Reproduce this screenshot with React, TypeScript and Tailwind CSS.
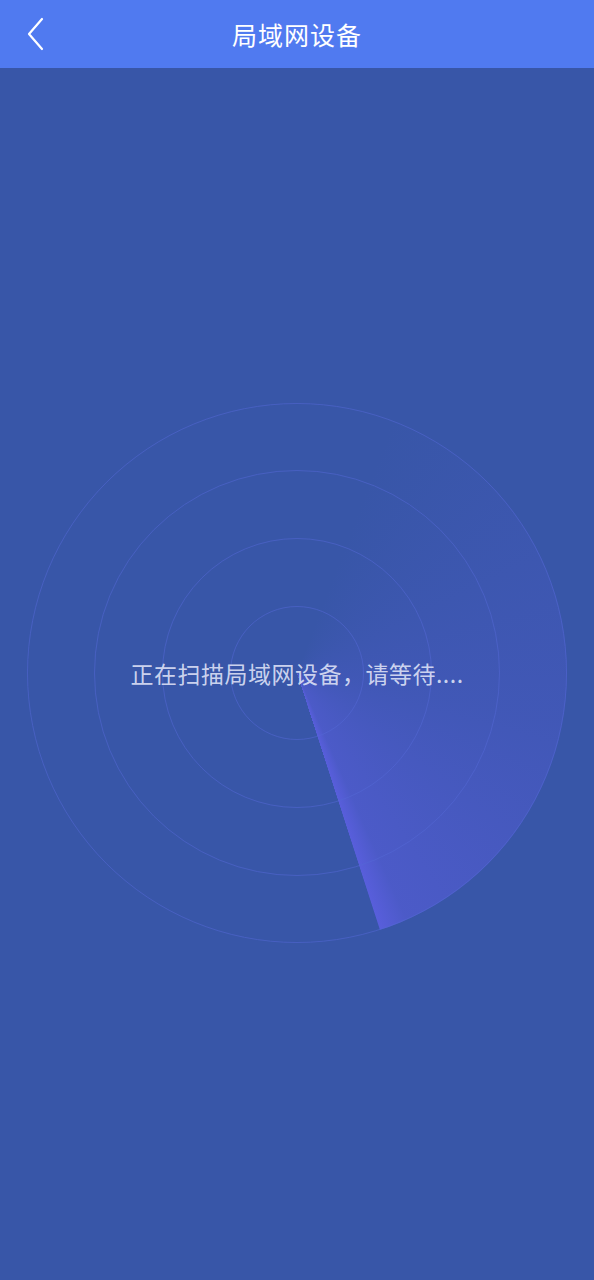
import React from 'react';

const RINGS = [540, 406, 270, 134];

export default function App() {
  return (
    <div
      className="min-h-screen w-full bg-[#3856a8] flex flex-col"
      style={{ fontFamily: '"Noto Sans CJK SC", "Noto Sans", sans-serif' }}
    >
      <header className="h-[68px] bg-[#507af0] flex items-center relative shrink-0">
        <button className="absolute left-[24px] top-[17px] w-[22px] h-[34px] flex items-center justify-center">
          <svg width="18" height="34" viewBox="0 0 18 34" fill="none">
            <path d="M16 2 L3 17 L16 32" stroke="white" strokeWidth="2.2" strokeLinecap="round" strokeLinejoin="round" />
          </svg>
        </button>
        <h1 className="w-full text-center text-white text-[25px] leading-none tracking-[1px]">局域网设备</h1>
      </header>

      <main className="flex justify-center pt-[335px]">
        <div className="relative w-[540px] h-[540px]">
          <div className="absolute inset-0 rounded-full bg-[conic-gradient(from_0deg,rgba(88,92,220,0)_20deg,rgba(88,92,220,0.28)_100deg,rgba(92,94,226,0.55)_156deg,rgba(96,96,232,0.8)_162deg,rgba(88,92,220,0)_162.2deg)]" />
          <svg className="absolute inset-0" width="540" height="540" viewBox="0 0 540 540">
            {RINGS.map((d) => (
              <circle key={d} cx="270" cy="270" r={d / 2 - 0.5} fill="none" stroke="#5468d6" strokeOpacity="0.55" strokeWidth="1" />
            ))}
          </svg>
          <p className="absolute left-0 right-0 top-[255px] text-center text-[23px] leading-[30px] tracking-[0.5px] text-[#dfe3f7]/90">
            正在扫描局域网设备，请等待....
          </p>
        </div>
      </main>
    </div>
  );
}
